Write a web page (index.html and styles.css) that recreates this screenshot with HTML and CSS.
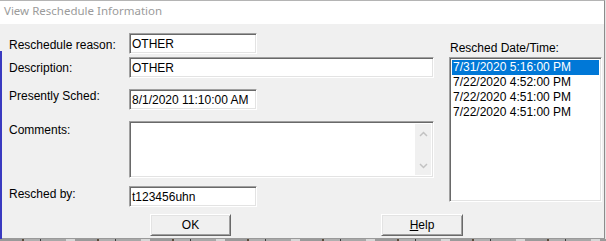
FILE: index.html
```html
<!DOCTYPE html>
<html lang="en">
<head>
  <meta charset="UTF-8">
  <meta name="viewport" content="width=device-width, initial-scale=1.0">
  <title>View Reschedule Information</title>
  <link rel="stylesheet" href="styles.css">
</head>
<body>
  <div class="window">
    <div class="titlebar">View Reschedule Information</div>

    <div class="client">
      <div class="top">
        <div class="form">
          <div class="row row-reason">
            <label class="label">Reschedule reason:</label>
            <div class="field short">OTHER</div>
          </div>
          <div class="row row-desc">
            <label class="label">Description:</label>
            <div class="field long">OTHER</div>
          </div>
          <div class="row row-sched">
            <label class="label">Presently Sched:</label>
            <div class="field short">8/1/2020 11:10:00 AM</div>
          </div>
          <div class="row row-comments">
            <label class="label">Comments:</label>
            <div class="field memo">
              <div class="memo-text"></div>
              <div class="scrollbar">
                <svg width="9" height="6" viewBox="0 0 9 6"><polyline points="1,5 4.5,1.5 8,5" fill="none" stroke="#c2c2c2" stroke-width="1.5"/></svg>
                <svg width="9" height="6" viewBox="0 0 9 6"><polyline points="1,1 4.5,4.5 8,1" fill="none" stroke="#c2c2c2" stroke-width="1.5"/></svg>
              </div>
            </div>
          </div>
          <div class="row row-by">
            <label class="label">Resched by:</label>
            <div class="field short">t123456uhn</div>
          </div>
        </div>

        <div class="side">
          <div class="side-label">Resched Date/Time:</div>
          <ul class="listbox">
            <li class="selected">7/31/2020 5:16:00 PM</li>
            <li>7/22/2020 4:52:00 PM</li>
            <li>7/22/2020 4:51:00 PM</li>
            <li>7/22/2020 4:51:00 PM</li>
          </ul>
        </div>
      </div>

      <div class="buttons">
        <button class="btn">OK</button>
        <button class="btn"><u>H</u>elp</button>
      </div>
    </div>
  </div>
  <div class="behind"></div>
</body>
</html>
```

FILE: styles.css
```css
body {
  margin: 0;
  padding: 0;
  width: 606px;
  height: 241px;
  overflow: hidden;
  background: #e6e6e6;
  font-family: "Liberation Sans", Arial, sans-serif;
  font-size: 12px;
  color: #000;
}

.window {
  position: relative;
  box-sizing: border-box;
  width: 605px;
  height: 239px;
  border-top: 1px solid #b4b4b4;
  border-right: 1px solid #8c8c8c;
  border-bottom: 1px solid #9a9a9a;
  background: #f0f0f0;
}

/* edge of the window behind, showing on the left */
.window::before {
  content: "";
  position: absolute;
  left: 0;
  top: 50px;
  bottom: -1px;
  width: 2px;
  background: #3a3ac0;
}

.titlebar {
  height: 23px;
  background: #fff;
  color: #9b9b9b;
  font-family: "Noto Sans", "Open Sans", sans-serif;
  font-size: 11.5px;
  line-height: 20px;
  padding-left: 4px;
}

.client {
  display: flex;
  flex-direction: column;
}

.top {
  display: flex;
  padding-left: 9px;
}

.form {
  width: 425px;
  padding-top: 9px;
}

.row {
  display: flex;
}

.label {
  width: 120px;
  line-height: 14px;
}

.row-reason .label { padding-top: 5px; }
.row-desc { margin-top: 3px; }
.row-desc .label { padding-top: 4px; }
.row-sched { margin-top: 11px; }
.row-sched .label { padding-top: 0; }
.row-comments { margin-top: 11px; }
.row-comments .label { padding-top: 2px; }
.row-by { margin-top: 8px; }
.row-by .label { padding-top: 1px; }

.field {
  box-sizing: border-box;
  height: 21px;
  background: #fff;
  border: 1px solid;
  border-color: #a0a0a0 #fff #fff #a0a0a0;
  box-shadow: inset 1px 1px #696969, inset -1px -1px #e3e3e3;
  padding: 3px 2px 0 2px;
  line-height: 14px;
  white-space: nowrap;
}

.short { width: 128px; }
.long { width: 305px; }

.memo {
  width: 305px;
  height: 57px;
  display: flex;
  padding: 2px 2px 2px 2px;
}

.memo-text {
  flex: 1;
}

.scrollbar {
  width: 16px;
  background: #f0f0f0;
  display: flex;
  flex-direction: column;
  justify-content: space-between;
  align-items: center;
  padding: 7px 0 6px 0;
}

.side {
  margin-left: 15px;
  width: 153px;
  padding-top: 17px;
}

.side-label {
  line-height: 14px;
  margin-bottom: 2px;
  padding-left: 1px;
}

.listbox {
  box-sizing: border-box;
  list-style: none;
  margin: 0;
  height: 145px;
  background: #fff;
  border: 1px solid;
  border-color: #a0a0a0 #fff #fff #a0a0a0;
  box-shadow: inset 1px 1px #696969, inset -1px -1px #e3e3e3;
  padding: 2px 2px;
}

.listbox li {
  height: 15px;
  line-height: 15px;
  padding-left: 1px;
  white-space: nowrap;
}

.listbox li.selected {
  background: #0078d7;
  color: #fff;
}

.buttons {
  display: flex;
  gap: 150px;
  padding-left: 150px;
  margin-top: 7px;
}

.btn {
  box-sizing: border-box;
  width: 81px;
  height: 22px;
  padding: 0;
  margin: 0;
  background: #f0f0f0;
  font-family: "Liberation Sans", Arial, sans-serif;
  font-size: 12px;
  color: #000;
  border: 1px solid;
  border-color: #fff #696969 #696969 #fff;
  box-shadow: inset 1px 1px #e3e3e3, inset -1px -1px #a0a0a0;
  border-radius: 0;
}

.btn + .btn {
  width: 82px;
}

.behind {
  height: 2px;
  background: repeating-linear-gradient(90deg, #9a9a9a 0 22px, #5a4a3a 22px 24px, #b0b0b0 24px 40px, #3c3c3c 40px 41px, #a8a8a8 41px 66px, #d8d8d8 66px 75px);
}
```
